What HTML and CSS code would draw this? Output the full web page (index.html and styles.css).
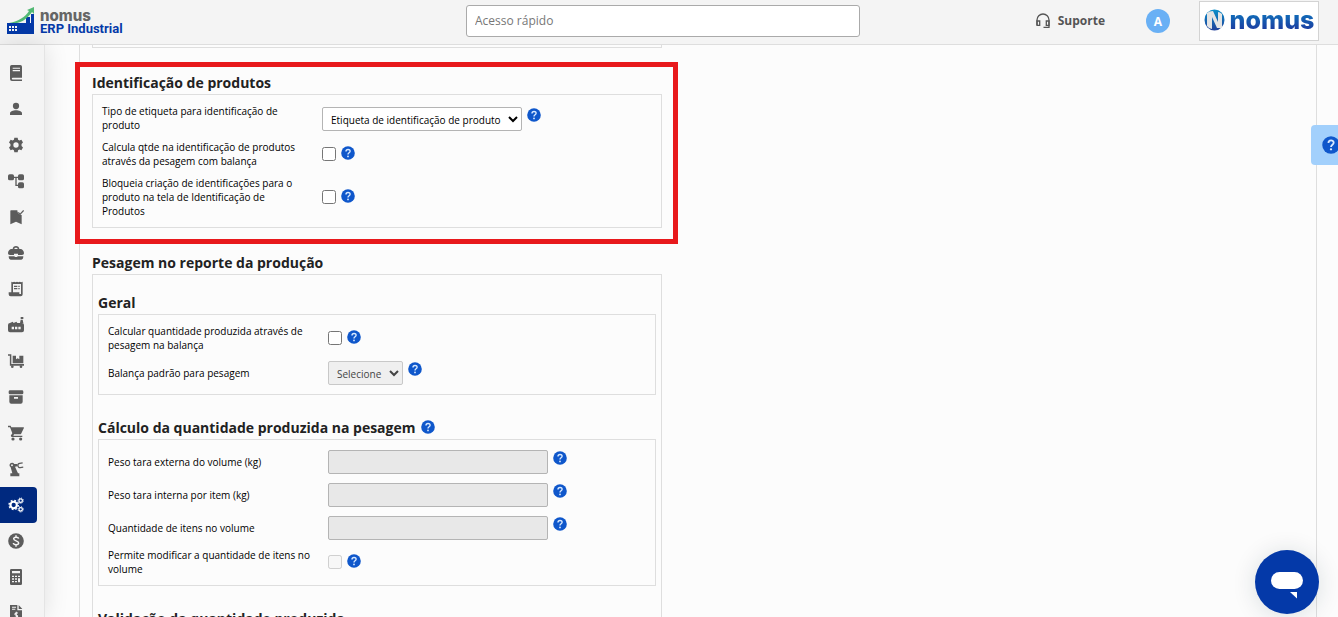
FILE: index.html
```html
<!DOCTYPE html>
<html lang="pt-BR">
<head>
  <meta charset="UTF-8">
  <meta name="viewport" content="width=device-width, initial-scale=1.0">
  <title>Nomus ERP Industrial</title>
  <link rel="stylesheet" href="styles.css">
</head>
<body>
  <header class="topbar">
    <a class="brand" href="#">
      <svg class="brand-icon" width="28" height="28" viewBox="0 0 28 28">
        <path fill="#0439a8" d="M0 16h19v-6h4v6h1V7h3v20H0z"/>
        <path fill="#f4f4f4" d="M2 19h2v2H2zM5 19h2v2H5zM8 19h2v2H8zM2 22h2v2H2zM5 22h2v2H5zM8 22h2v2H8z"/>
        <path fill="#52b974" d="M2 16C12 14 18 10 22 4l-2-1 7-3v7l-2-2c-5 7-10 10-15 11z"/>
      </svg>
      <span class="brand-text">
        <span class="brand-name">nomus</span>
        <span class="brand-product">ERP Industrial</span>
      </span>
    </a>
    <input class="search" type="text" placeholder="Acesso rápido" aria-label="Acesso rápido">
    <div class="topbar-right">
      <a class="support" href="#">
        <svg width="14" height="16" viewBox="0 0 14 16" fill="none" stroke="#555" stroke-width="1.300">
          <path d="M1 12V7a6 6 0 0 1 12 0v7.300H7.500"/>
          <path d="M1 8h2.700v4.300H1zM13 8h-2.700v4.300H13z"/>
        </svg>
        Suporte
      </a>
      <button class="avatar" type="button">A</button>
      <a class="company" href="#">
        <svg width="21" height="22" viewBox="0 0 21 22">
          <defs>
            <linearGradient id="globe" x1="0" y1="0" x2="0" y2="1">
              <stop offset="0" stop-color="#0a8fc9"/>
              <stop offset="1" stop-color="#20409a"/>
            </linearGradient>
          </defs>
          <ellipse cx="10.500" cy="11" rx="10" ry="10.500" fill="url(#globe)"/>
          <path fill="#e4e4e4" d="M3 4q2-2 6-2l5 11V3q2 0 4 2v14h-5L8 8v12q-3 0-5-3z"/>
        </svg>
        <span class="company-name">nomus</span>
      </a>
    </div>
  </header>

  <div class="layout">
    <nav class="sidebar">
      <a class="side-item" href="#" aria-label="Cadastros">
        <svg viewBox="0 0 24 24"><path fill-rule="evenodd" d="M5.500 0h13A2.500 2.500 0 0 1 21 2.500V19H7a1.300 1.300 0 0 0 0 2.600h14V24H6a3 3 0 0 1-3-3V2.500A2.500 2.500 0 0 1 5.500 0zM7 4v1.800h11V4zm0 3.500v1.800h11V7.500z"/></svg>
      </a>
      <a class="side-item" href="#" aria-label="Pessoas">
        <svg viewBox="0 0 24 24"><circle cx="12" cy="7.500" r="4.700"/><path d="M3 21v-2.500c0-3 5-4.500 9-4.500s9 1.500 9 4.500V21z"/></svg>
      </a>
      <a class="side-item" href="#" aria-label="Configurações">
        <svg viewBox="0 0 24 24"><path fill-rule="evenodd" d="M9.500 1h5l.6 3 2 1.200 3-1 2.400 4.200-2.200 2v3.200l2.200 2-2.400 4.200-3-1-2 1.200-.6 3h-5l-.6-3-2-1.200-3 1-2.400-4.200 2.200-2v-3.200l-2.200-2 2.400-4.200 3 1 2-1.200zM12 8a4 4 0 1 0 0 8 4 4 0 0 0 0-8z"/></svg>
      </a>
      <a class="side-item" href="#" aria-label="Processos">
        <svg viewBox="0 0 24 24"><rect x="0" y="2" width="9" height="9" rx="2.500"/><rect x="15" y="2" width="9" height="9" rx="2.500"/><rect x="15" y="14" width="9" height="9" rx="2.500"/><path d="M8 5.500h8v2h-3v10h3v2h-5v-12H8z"/></svg>
      </a>
      <a class="side-item" href="#" aria-label="Qualidade">
        <svg viewBox="0 0 24 24"><path d="M4.500 2H14c0 4 2 7 6.500 7v14L12 19l-8.500 4V3a1 1 0 0 1 1-1z"/><path d="m15.500 5 2.500 3 5.500-6" fill="none" stroke="currentColor" stroke-width="2"/></svg>
      </a>
      <a class="side-item" href="#" aria-label="Comercial">
        <svg viewBox="0 0 24 24"><path fill-rule="evenodd" d="M7 6c0-6 10-6 10 0h2c2 0 5 3 5 6 0 2-1 3-3 3h-6v-2H9v2H3c-2 0-3-1-3-3 0-3 3-6 5-6zm2.500 0h5c0-2.500-5-2.500-5 0z"/><path d="M1 17h9v1h4v-1h9c0 3-1 5-3 5H4c-2 0-3-2-3-5z"/></svg>
      </a>
      <a class="side-item" href="#" aria-label="Pedidos">
        <svg viewBox="0 0 24 24"><path fill-rule="evenodd" d="m5 1 2.100 1 2.100-1 2.100 1 2.200-1 2.100 1 2.100-1 2.100 1L22 1v19a3 3 0 0 1-3 3H4a3 3 0 0 1-3-3v-3h4zm2.500 3.500V17H17v2.500h2.500v-15zM9 7h5v2H9zm6.500 0h2v2h-2zM9 10.500h5v2H9zm6.500 0h2v2h-2z"/></svg>
      </a>
      <a class="side-item" href="#" aria-label="Produção">
        <svg viewBox="0 0 24 24"><path fill-rule="evenodd" d="M0 12a3 3 0 0 1 3-3l4-2 1.500 2 4-2L14 9h7a3 3 0 0 1 3 3v8a3 3 0 0 1-3 3H3a3 3 0 0 1-3-3zm5.500 2.500v4H9v-4zm5 0v4H14v-4zm5 0v4H19v-4z"/><path d="m18 9 1-5h3l1 5zM19 0h4v3h-4z"/></svg>
      </a>
      <a class="side-item" href="#" aria-label="Expedição">
        <svg viewBox="0 0 24 24"><path d="M0 2h5v14.500h19V19H2.800V4.200H0z"/><path d="M7 4h5v5.500L14.500 8 17 9.500V4h6v11.500H7z"/><circle cx="6.500" cy="20.500" r="2"/><circle cx="19.500" cy="20.500" r="2"/></svg>
      </a>
      <a class="side-item" href="#" aria-label="Estoque">
        <svg viewBox="0 0 24 24"><rect x="1" y="2" width="22" height="6" rx="2"/><path fill-rule="evenodd" d="M2 9.500h20V19a3 3 0 0 1-3 3H5a3 3 0 0 1-3-3zM9 12v2.500h6V12z"/></svg>
      </a>
      <a class="side-item" href="#" aria-label="Compras">
        <svg viewBox="0 0 24 24"><path d="M0 1h4l1 2.500h18c1 0 1 1 .7 1.500l-4 8c-.4.700-1 1-1.700 1H9l-1 2h13.500v2H6c-1.500 0-2-1.500-1.500-2.500l2-3L3 3.500H0z"/><circle cx="7.500" cy="21" r="2.400"/><circle cx="19" cy="21" r="2.400"/></svg>
      </a>
      <a class="side-item" href="#" aria-label="Manutenção">
        <svg viewBox="0 0 24 24"><path fill-rule="evenodd" d="M6 2.500a3.700 3.700 0 0 1 3.400 2H14v3.500l-3.500.5L15 18.500h2V23H3.500v-4.500h3L4 9.500a3.800 3.800 0 0 1 2-7zm0 2.400a1.400 1.400 0 1 0 0 2.800 1.400 1.400 0 0 0 0-2.800z"/><path d="M22.500 3.500h-4.500a3.200 3.200 0 0 0 0 6.400h4.500" transform="rotate(-8 18 7)" fill="none" stroke="currentColor" stroke-width="2"/></svg>
      </a>
      <a class="side-item active" href="#" aria-label="Parâmetros">
        <svg viewBox="0 0 24 24">
          <g fill="none" stroke="currentColor">
            <circle cx="8.500" cy="12" r="4.800" stroke-width="3.200"/>
            <circle cx="8.500" cy="12" r="7" stroke-width="2" stroke-dasharray="2.750"/>
            <circle cx="19" cy="5.500" r="2.600" stroke-width="1.800"/>
            <circle cx="19" cy="5.500" r="4" stroke-width="1.400" stroke-dasharray="1.570"/>
            <circle cx="19" cy="18.500" r="2.600" stroke-width="1.800"/>
            <circle cx="19" cy="18.500" r="4" stroke-width="1.400" stroke-dasharray="1.570"/>
          </g>
        </svg>
      </a>
      <a class="side-item" href="#" aria-label="Financeiro">
        <svg viewBox="0 0 24 24"><circle cx="12" cy="12" r="11.700"/><path d="M16 8.500c-.5-3-7.500-3-7.500.3 0 3.600 7.500 2.400 7.500 6.200 0 3.400-7.500 3.400-8 0M12 3.500v3M12 17.500v3" fill="none" stroke="#f4f4f4" stroke-width="2.200"/></svg>
      </a>
      <a class="side-item" href="#" aria-label="Custos">
        <svg viewBox="0 0 24 24"><path fill-rule="evenodd" d="M5 0h14a2 2 0 0 1 2 2v20a2 2 0 0 1-2 2H5a2 2 0 0 1-2-2V2a2 2 0 0 1 2-2zm1 3v3.500h12V3zm0 7v2h3v-2zm4.500 0v2h3v-2zm4.500 0v2h3v-2zm-9 4v2h3v-2zm4.500 0v2h3v-2zm4.500 0v6h3v-6zm-9 4v2h3v-2zm4.500 0v2h3v-2z"/></svg>
      </a>
      <a class="side-item" href="#" aria-label="Fiscal">
        <svg viewBox="0 0 24 24"><path d="M3 0h11v8h7v16H3z"/><path d="m16 0 5.500 6H16z"/><path d="M6 3.500h6M6 6.500h5M15 12c-5-1-6 3-2.500 3.500s2 4-2.500 3M12.500 10v11" fill="none" stroke="#f4f4f4" stroke-width="1.600"/></svg>
      </a>
    </nav>

    <main class="content">
      <div class="panel">
        <div class="group group-prev"></div>

        <section class="section highlighted">
          <h2 class="title">Identificação de produtos</h2>
          <div class="group">
            <div class="row">
              <label for="tipo-etiqueta">Tipo de etiqueta para identificação de produto</label>
              <div class="control field">
                <select id="tipo-etiqueta" class="select-wide">
                  <option>Etiqueta de identificação de produto</option>
                </select>
                <button class="help" type="button" aria-label="Ajuda"><svg viewBox="0 0 14 14"><use href="#help-mark"/></svg></button>
              </div>
            </div>
            <div class="row">
              <label for="calcula-qtde">Calcula qtde na identificação de produtos através da pesagem com balança</label>
              <div class="control">
                <input type="checkbox" id="calcula-qtde">
                <button class="help" type="button" aria-label="Ajuda"><svg viewBox="0 0 14 14"><use href="#help-mark"/></svg></button>
              </div>
            </div>
            <div class="row">
              <label for="bloqueia-criacao">Bloqueia criação de identificações para o produto na tela de Identificação de Produtos</label>
              <div class="control">
                <input type="checkbox" id="bloqueia-criacao">
                <button class="help" type="button" aria-label="Ajuda"><svg viewBox="0 0 14 14"><use href="#help-mark"/></svg></button>
              </div>
            </div>
          </div>
        </section>

        <section class="section">
          <h2 class="title">Pesagem no reporte da produção</h2>
          <div class="group group-outer">
            <h3 class="title">Geral</h3>
            <div class="group">
              <div class="row">
                <label for="calcular-quantidade">Calcular quantidade produzida através de pesagem na balança</label>
                <div class="control">
                  <input type="checkbox" id="calcular-quantidade">
                  <button class="help" type="button" aria-label="Ajuda"><svg viewBox="0 0 14 14"><use href="#help-mark"/></svg></button>
                </div>
              </div>
              <div class="row">
                <label for="balanca-padrao">Balança padrão para pesagem</label>
                <div class="control field">
                  <select id="balanca-padrao" class="select-small" disabled>
                    <option>Selecione</option>
                  </select>
                  <button class="help" type="button" aria-label="Ajuda"><svg viewBox="0 0 14 14"><use href="#help-mark"/></svg></button>
                </div>
              </div>
            </div>

            <h3 class="title">
              Cálculo da quantidade produzida na pesagem
              <button class="help" type="button" aria-label="Ajuda"><svg viewBox="0 0 14 14"><use href="#help-mark"/></svg></button>
            </h3>
            <div class="group">
              <div class="row">
                <label for="tara-externa">Peso tara externa do volume (kg)</label>
                <div class="control field">
                  <input type="text" id="tara-externa" disabled>
                  <button class="help" type="button" aria-label="Ajuda"><svg viewBox="0 0 14 14"><use href="#help-mark"/></svg></button>
                </div>
              </div>
              <div class="row">
                <label for="tara-interna">Peso tara interna por item (kg)</label>
                <div class="control field">
                  <input type="text" id="tara-interna" disabled>
                  <button class="help" type="button" aria-label="Ajuda"><svg viewBox="0 0 14 14"><use href="#help-mark"/></svg></button>
                </div>
              </div>
              <div class="row">
                <label for="qtde-itens">Quantidade de itens no volume</label>
                <div class="control field">
                  <input type="text" id="qtde-itens" disabled>
                  <button class="help" type="button" aria-label="Ajuda"><svg viewBox="0 0 14 14"><use href="#help-mark"/></svg></button>
                </div>
              </div>
              <div class="row">
                <label for="permite-modificar">Permite modificar a quantidade de itens no volume</label>
                <div class="control">
                  <input type="checkbox" id="permite-modificar" disabled>
                  <button class="help" type="button" aria-label="Ajuda"><svg viewBox="0 0 14 14"><use href="#help-mark"/></svg></button>
                </div>
              </div>
            </div>

            <h3 class="title">Validação da quantidade produzida</h3>
          </div>
        </section>
      </div>
    </main>
  </div>

  <button class="help-tab" type="button" aria-label="Ajuda"><svg width="18" height="18" viewBox="0 0 14 14"><use href="#help-mark"/></svg></button>

  <button class="chat" type="button" aria-label="Chat">
    <svg width="64" height="64" viewBox="0 0 64 64" fill="#fff">
      <rect x="16" y="22" width="32" height="17" rx="8.500"/>
      <path d="M35 42h7v6.500z"/>
    </svg>
  </button>

  <svg class="symbols" width="0" height="0" aria-hidden="true">
    <symbol id="help-mark" viewBox="0 0 14 14">
      <circle cx="7" cy="7" r="6.800" fill="#0f57cb"/>
      <path d="M5 5.500C5 2.800 9.100 2.800 9.100 5.300 9.100 6.800 7 6.800 7 8.500" fill="none" stroke="#d8e9ff" stroke-width="1.400"/>
      <circle cx="7" cy="10.400" r=".9" fill="#d8e9ff"/>
    </symbol>
  </svg>
</body>
</html>
```
FILE: styles.css
```css
* {
  box-sizing: border-box;
}

body {
  margin: 0;
  height: 100vh;
  display: flex;
  flex-direction: column;
  overflow: hidden;
  background-color: #fcfcfc;
  color: #000;
  font-family: "Open Sans", "Noto Sans", sans-serif;
  font-size: 10px;
  line-height: 14px;
}

a {
  color: inherit;
  text-decoration: none;
}

button {
  padding: 0;
  border: none;
  background: none;
  font-family: inherit;
  cursor: pointer;
}

/* Barra superior */
.topbar {
  flex: none;
  display: grid;
  grid-template-columns: 1fr 394px 1fr;
  align-items: center;
  height: 45px;
  padding: 0 19px 2px 7px;
  background-color: #f4f4f4;
  border-bottom: 1px solid #dedede;
}

.brand {
  display: flex;
  align-items: center;
  gap: 5px;
}

.brand-text {
  display: flex;
  flex-direction: column;
  padding-top: 3px;
}

.brand-name {
  color: #666;
  font-family: Inter, "Liberation Sans", Arial, sans-serif;
  font-size: 15px;
  font-weight: 800;
  line-height: 12px;
}

.brand-product {
  color: #0439a8;
  font-family: Roboto, sans-serif;
  font-size: 13px;
  font-weight: bold;
  line-height: 14px;
}

.search {
  width: 100%;
  height: 32px;
  padding: 0 8px 2px;
  border: 1px solid #aaa;
  border-radius: 3px;
  background-color: #fff;
  font-family: inherit;
  font-size: 12px;
}

.search::placeholder {
  color: #777;
}

.topbar-right {
  display: flex;
  justify-content: flex-end;
  align-items: center;
}

.support {
  display: flex;
  align-items: center;
  gap: 8px;
  margin-right: 41px;
  color: #555;
  font-size: 12px;
  font-weight: bold;
}

.avatar {
  width: 24px;
  height: 24px;
  margin-right: 29px;
  border-radius: 50%;
  background-color: #69b0f5;
  color: #fff;
  font-size: 12px;
  font-weight: bold;
}

.company {
  display: flex;
  align-items: center;
  justify-content: center;
  gap: 5px;
  width: 120px;
  height: 40px;
  padding-bottom: 2px;
  border: 1px solid #d3d3d3;
  background-color: #fff;
}

.company-name {
  background: linear-gradient(#0a86c6, #20309a);
  background-clip: text;
  -webkit-background-clip: text;
  color: transparent;
  font-family: Inter, "Liberation Sans", Arial, sans-serif;
  font-size: 25px;
  font-weight: 800;
  line-height: 28px;
}

.layout {
  flex: 1;
  min-height: 0;
  display: flex;
}

/* Menu lateral */
.sidebar {
  flex: none;
  width: 45px;
  padding-top: 10px;
  overflow: hidden;
  background-color: #f4f4f4;
  border-right: 1px solid #e4e4e4;
  box-shadow: 0 0 24px rgba(0, 0, 0, 0.12);
}

.side-item {
  display: flex;
  align-items: center;
  width: 37px;
  height: 36px;
  padding-left: 8px;
  border-radius: 0 4px 4px 0;
  color: #5c5c5c;
}

.side-item svg {
  width: 16px;
  height: 16px;
  fill: currentColor;
}

.side-item.active {
  background-color: #00297f;
  color: #fff;
}

/* Conteúdo */
.content {
  flex: 1;
  min-width: 0;
  overflow: hidden;
  padding: 0 21px 0 34px;
}

.panel {
  min-height: 100%;
  padding: 0 12px;
  border: solid #dedede;
  border-width: 0 1px;
}

.section {
  max-width: 570px;
  padding-top: 26px;
}

.group {
  padding: 9px;
  border: 1px solid #dedede;
}

.group-prev {
  max-width: 570px;
  padding: 2px 0 0;
  border-top: none;
}

.group-outer {
  padding: 19px 5px 16px;
}

.title {
  display: flex;
  align-items: center;
  gap: 5px;
  margin: 0;
  padding-bottom: 2px;
  color: #222;
  font-size: 14px;
  font-weight: bold;
  line-height: 18px;
}

.group + .title {
  margin-top: 24px;
}

/* moldura vermelha em volta da seção */
.highlighted {
  position: relative;
}

.highlighted::after {
  content: "";
  position: absolute;
  top: 14px;
  right: -16px;
  bottom: -16px;
  left: -17px;
  border: 5px solid #e8191c;
  pointer-events: none;
}

.row {
  display: flex;
  align-items: center;
}

.row + .row {
  margin-top: 8px;
}

.row label {
  flex: none;
  width: 220px;
  padding-right: 16px;
}

.control {
  display: flex;
  align-items: center;
  gap: 5px;
  padding-bottom: 1px;
}

.control.field {
  padding: 1px 0 0;
}

.control input[type="checkbox"] {
  width: 14px;
  height: 14px;
  margin: 0;
}

.control input[type="text"],
.control select {
  height: 24px;
  border: 1px solid #b4b4b4;
  border-radius: 2px;
  background-color: #fff;
  color: #000;
  font-family: inherit;
  font-size: 10px;
}

.control select {
  padding: 2px 0 0 4px;
}

.control input[type="text"] {
  width: 220px;
}

.control input[type="text"]:disabled {
  background-color: #e8e8e8;
}

.control select:disabled {
  border-color: #c8c8c8;
  background-color: #efefef;
  color: #444;
  opacity: 1;
}

.control .select-wide {
  width: 200px;
}

.control .select-small {
  width: 75px;
}

.help {
  display: block;
  width: 14px;
  height: 14px;
  margin-bottom: 2px;
}

.help svg {
  display: block;
}

.field .help {
  margin-bottom: 8px;
}

/* Botões flutuantes */
.help-tab {
  position: fixed;
  top: 125px;
  right: 0;
  display: flex;
  align-items: center;
  width: 27px;
  height: 40px;
  padding-left: 11px;
  overflow: hidden;
  border-radius: 4px 0 0 4px;
  background-color: #a2d0fc;
}

.help-tab svg {
  flex: none;
}

.chat {
  position: fixed;
  right: 19px;
  bottom: 3px;
  width: 64px;
  height: 64px;
  border-radius: 50%;
  background-color: #0439a8;
  box-shadow: 0 2px 24px rgba(0, 40, 60, 0.14);
}

.chat svg {
  display: block;
}

.symbols {
  position: absolute;
}
```
